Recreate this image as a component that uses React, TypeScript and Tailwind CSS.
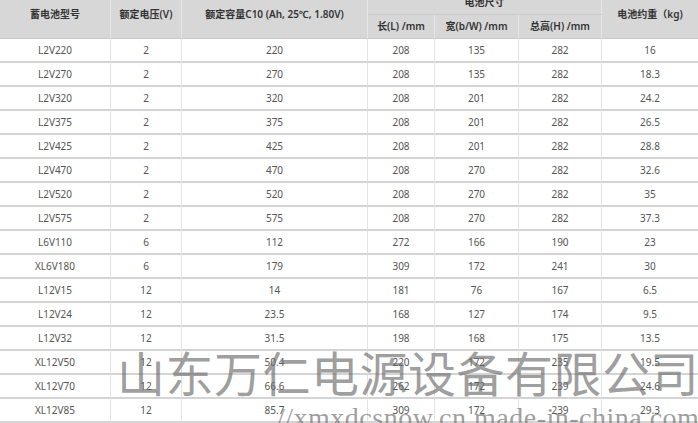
import React from 'react';

const ROWS: string[][] = [
  ['L2V220', '2', '220', '208', '135', '282', '16'],
  ['L2V270', '2', '270', '208', '135', '282', '18.3'],
  ['L2V320', '2', '320', '208', '201', '282', '24.2'],
  ['L2V375', '2', '375', '208', '201', '282', '26.5'],
  ['L2V425', '2', '425', '208', '201', '282', '28.8'],
  ['L2V470', '2', '470', '208', '270', '282', '32.6'],
  ['L2V520', '2', '520', '208', '270', '282', '35'],
  ['L2V575', '2', '575', '208', '270', '282', '37.3'],
  ['L6V110', '6', '112', '272', '166', '190', '23'],
  ['XL6V180', '6', '179', '309', '172', '241', '30'],
  ['L12V15', '12', '14', '181', '76', '167', '6.5'],
  ['L12V24', '12', '23.5', '168', '127', '174', '9.5'],
  ['L12V32', '12', '31.5', '198', '168', '175', '13.5'],
  ['XL12V50', '12', '50.4', '220', '172', '235', '19.5'],
  ['XL12V70', '12', '66.6', '262', '172', '239', '24.6'],
  ['XL12V85', '12', '85.7', '309', '172', '239', '29.3'],
];

const font = "font-['Noto_Sans','Noto_Sans_CJK_SC',sans-serif]";

function HeadCell({ children, className = '' }: { children: React.ReactNode; className?: string }) {
  return (
    <div
      className={`flex items-center justify-center border-r border-b border-r-[#e6e6e6] border-b-[#c9c9c9] bg-[#d7d7d7] text-[10px] font-semibold text-[#333] ${className}`}
    >
      {children}
    </div>
  );
}

export default function App() {
  return (
    <div className={`relative h-[423px] w-[698px] overflow-hidden bg-white ${font}`}>
      <div className="-mt-[9px] grid grid-cols-[111px_71px_186px_67px_84px_83px_96px] auto-rows-[24px]">
        <HeadCell className="row-span-2">蓄电池型号</HeadCell>
        <HeadCell className="row-span-2">额定电压(V)</HeadCell>
        <HeadCell className="row-span-2">额定容量C10 (Ah, 25℃, 1.80V)</HeadCell>
        <HeadCell className="col-span-3">电池尺寸</HeadCell>
        <HeadCell className="row-span-2 border-r-0">电池约重（kg)</HeadCell>
        <HeadCell>长(L) /mm</HeadCell>
        <HeadCell>宽(b/W) /mm</HeadCell>
        <HeadCell>总高(H) /mm</HeadCell>

        {ROWS.map((row) =>
          row.map((cell, i) => (
            <div
              key={row[0] + i}
              className={`flex items-center justify-center border-b-2 border-b-[#d4d4d4] text-[10px] text-[#555] ${
                i < 6 ? 'border-r border-r-[#e4e4e4]' : ''
              }`}
            >
              {cell}
            </div>
          ))
        )}
      </div>

      {/* watermark */}
      <div className="pointer-events-none absolute left-[117px] top-[347px] whitespace-nowrap font-['Noto_Sans_CJK_SC',sans-serif] text-[48px] leading-none tracking-[0.5px] text-[rgba(110,110,110,0.68)]">
        山东万仁电源设备有限公司
      </div>
      <div className="pointer-events-none absolute left-[277px] top-[404px] whitespace-nowrap font-['Liberation_Serif',serif] text-[28px] leading-none tracking-[0.5px] text-[rgba(110,110,110,0.68)]">
        //xmxdcsnow.cn.made-in-china.com
      </div>
    </div>
  );
}
